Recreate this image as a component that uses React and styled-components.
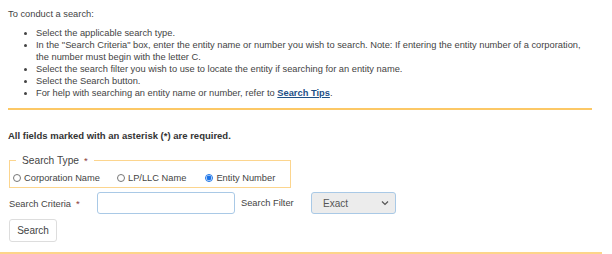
import styled, { createGlobalStyle } from "styled-components";

const Global = createGlobalStyle`
  body {
    margin: 0;
    background: #fff;
    font-family: "Liberation Sans", Arial, sans-serif;
    color: #444;
  }
`;

const Page = styled.div`
  width: 612px;
  height: 254px;
  overflow: hidden;
  font-size: 9.3px;
`;

const Intro = styled.div`
  margin: 0 20px 0 8px;
  padding-top: 8px;
  border-bottom: 2px solid #fcc866;
  padding-bottom: 9px;
`;

const Lead = styled.p`
  margin: 0 0 7px;
  line-height: 12px;
`;

const Steps = styled.ul`
  margin: 0;
  padding-left: 28px;
  li {
    line-height: 12px;
  }
`;

const TipLink = styled.a`
  color: #1d4f86;
  font-weight: bold;
  text-decoration: underline;
`;

const Form = styled.div`
  padding: 20px 0 0;
  border-bottom: 2px solid #fdd58a;
  height: 144px;
  box-sizing: border-box;
  width: 602px;
`;

const Required = styled.p`
  margin: 0 0 14px 8px;
  font-weight: bold;
  color: #333;
  font-size: 9.5px;
`;

const TypeBox = styled.fieldset`
  margin: 0 0 0 9px;
  width: 282px;
  box-sizing: border-box;
  border: 1px solid #fcd58e;
  padding: 7px 4px 4px 3px;
  display: flex;
  gap: 11px;
  align-items: center;
`;

const Legend = styled.legend`
  font-size: 10.2px;
  color: #444;
  padding: 0 6px;
  margin-left: 3px;
`;

const Star = styled.span`
  color: #8b3a3a;
  margin-left: 5px;
  font-size: 9.5px;
`;

const Choice = styled.label`
  display: flex;
  align-items: center;
  gap: 2px;
  margin-right: ${(p) => p.$gap || 0}px;
  input {
    width: 8px;
    height: 8px;
    margin: 0 1px 0 0;
    accent-color: #1a73e8;
  }
`;

const Row = styled.div`
  display: flex;
  align-items: center;
  margin: 4px 0 0 9px;
`;

const Label = styled.span`
  width: ${(p) => p.$w}px;
  flex-shrink: 0;
`;

const TextBox = styled.input`
  width: 138px;
  height: 22px;
  box-sizing: border-box;
  border: 1px solid #a9c9e6;
  border-radius: 3px;
  margin-right: 6px;
  outline: none;
`;

const Select = styled.div`
  width: 85px;
  height: 22px;
  box-sizing: border-box;
  border: 1px solid #a9c9e6;
  border-radius: 3px;
  background: #ececec;
  display: flex;
  align-items: center;
  justify-content: space-between;
  padding: 0 6px 0 11px;
  font-size: 10px;
  color: #555;
`;

const Button = styled.button`
  margin: 5px 0 0 9px;
  height: 23px;
  width: 48px;
  font-family: inherit;
  font-size: 10px;
  color: #444;
  background: #fff;
  border: 1px solid #ddd;
  border-radius: 3px;
  padding: 0;
`;

export default function App() {
  return (
    <Page>
      <Global />
      <Intro>
        <Lead>To conduct a search:</Lead>
        <Steps>
          <li>Select the applicable search type.</li>
          <li>
            In the "Search Criteria" box, enter the entity name or number you wish to search. Note: If
            entering the entity number of a corporation, the number must begin with the letter C.
          </li>
          <li>Select the search filter you wish to use to locate the entity if searching for an entity name.</li>
          <li>Select the Search button.</li>
          <li>
            For help with searching an entity name or number, refer to <TipLink>Search Tips</TipLink>.
          </li>
        </Steps>
      </Intro>
      <Form>
        <Required>All fields marked with an asterisk (*) are required.</Required>
        <TypeBox>
          <Legend>
            Search Type<Star>*</Star>
          </Legend>
          <Choice $gap={6}>
            <input type="radio" name="t" /> Corporation Name
          </Choice>
          <Choice $gap={8}>
            <input type="radio" name="t" /> LP/LLC Name
          </Choice>
          <Choice>
            <input type="radio" name="t" defaultChecked /> Entity Number
          </Choice>
        </TypeBox>
        <Row>
          <Label $w={88}>
            Search Criteria<Star>*</Star>
          </Label>
          <TextBox />
          <Label $w={70}>Search Filter</Label>
          <Select>
            <span>Exact</span>
            <svg width="8" height="6" viewBox="0 0 8 6">
              <path d="M1 1.5 L4 4.5 L7 1.5" fill="none" stroke="#555" strokeWidth="1.2" />
            </svg>
          </Select>
        </Row>
        <Button>Search</Button>
      </Form>
    </Page>
  );
}
